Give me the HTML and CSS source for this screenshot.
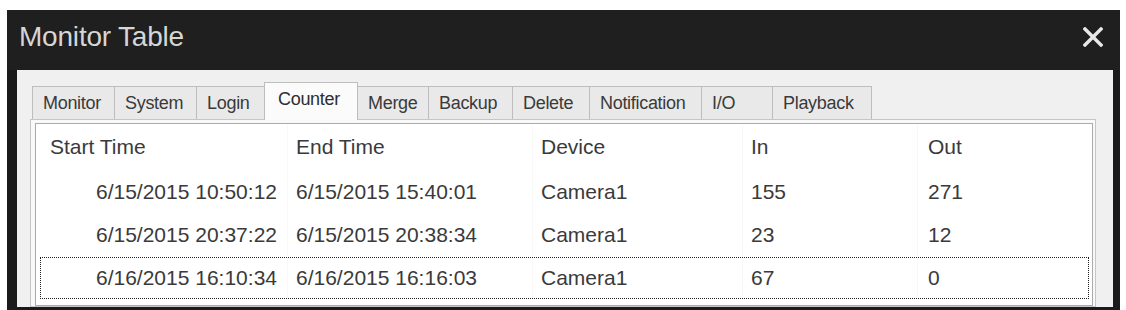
FILE: index.html
```html
<!DOCTYPE html>
<html>
<head>
<meta charset="utf-8">
<link rel="stylesheet" href="styles.css">
</head>
<body>
<div class="window">
  <div class="titlebar">
    <span class="title">Monitor Table</span>
    <svg class="close" width="20" height="20" viewBox="0 0 20 20">
      <path d="M2 2 L18 18 M18 2 L2 18" stroke="#e8e8e8" stroke-width="3.4" stroke-linecap="square" fill="none"/>
    </svg>
  </div>
  <div class="body">
    <div class="tabs">
      <div class="tab">Monitor</div>
      <div class="tab">System</div>
      <div class="tab">Login</div>
      <div class="tab active">Counter</div>
      <div class="tab">Merge</div>
      <div class="tab">Backup</div>
      <div class="tab">Delete</div>
      <div class="tab">Notification</div>
      <div class="tab">I/O</div>
      <div class="tab">Playback</div>
    </div>
    <div class="page">
      <div class="list">
        <div class="row head">
          <div class="c c1">Start Time</div>
          <div class="c">End Time</div>
          <div class="c">Device</div>
          <div class="c">In</div>
          <div class="c">Out</div>
        </div>
        <div class="row">
          <div class="c c1">6/15/2015 10:50:12</div>
          <div class="c">6/15/2015 15:40:01</div>
          <div class="c">Camera1</div>
          <div class="c">155</div>
          <div class="c">271</div>
        </div>
        <div class="row">
          <div class="c c1">6/15/2015 20:37:22</div>
          <div class="c">6/15/2015 20:38:34</div>
          <div class="c">Camera1</div>
          <div class="c">23</div>
          <div class="c">12</div>
        </div>
        <div class="row focus">
          <div class="c c1">6/16/2015 16:10:34</div>
          <div class="c">6/16/2015 16:16:03</div>
          <div class="c">Camera1</div>
          <div class="c">67</div>
          <div class="c">0</div>
        </div>
      </div>
    </div>
  </div>
</div>
</body>
</html>
```
FILE: styles.css
```css
html, body {
  margin: 0;
  padding: 0;
  background: #ffffff;
  overflow: hidden;
}

.window {
  margin: 10px 0 0 7px;
  width: 1113px;
  height: 300px;
  box-sizing: border-box;
  background: #1b1b1b;
  padding: 0 7px 3px 10px;
  display: flex;
  flex-direction: column;
}

.titlebar {
  height: 60px;
  flex: none;
  display: flex;
  align-items: center;
  justify-content: space-between;
  box-sizing: border-box;
  background: #1f1f1f;
  margin: 0 -7px 0 -10px;
  padding: 0 17px 6px 12px;
}

.title {
  font-family: "Liberation Sans", Arial, sans-serif;
  font-size: 28px;
  color: #d6d6d6;
  letter-spacing: -0.2px;
}

.close {
  display: block;
}

.body {
  flex: 1;
  min-height: 0;
  background: #f0f0f0;
  padding-top: 12px;
  display: flex;
  flex-direction: column;
  overflow: hidden;
}

.tabs {
  display: flex;
  align-items: flex-end;
  height: 38px;
  margin: 0 0 -1px 15px;
  position: relative;
  z-index: 1;
  flex: none;
}

.tab {
  height: 33px;
  margin-bottom: 1px;
  box-sizing: border-box;
  border: 1px solid #bdbdbd;
  border-left: none;
  border-bottom: none;
  background: #e9e9e9;
  display: flex;
  align-items: center;
  padding-left: 10px;
  font-family: "Liberation Sans", Arial, sans-serif;
  font-size: 18px;
  color: #3a3a3a;
  letter-spacing: -0.3px;
}

.tab:first-child {
  border-left: 1px solid #bdbdbd;
}

.tab:nth-child(1) { width: 83px; }
.tab:nth-child(2) { width: 82px; }
.tab:nth-child(3) { width: 68px; }
.tab:nth-child(4) { width: 94px; }
.tab:nth-child(5) { width: 71px; }
.tab:nth-child(6) { width: 84px; }
.tab:nth-child(7) { width: 77px; }
.tab:nth-child(8) { width: 112px; }
.tab:nth-child(9) { width: 71px; }
.tab:nth-child(10) { width: 99px; }

.tab.active {
  height: 38px;
  margin-bottom: 0;
  margin-left: -1px;
  border-left: 1px solid #bdbdbd;
  background: #fbfbfb;
  padding-left: 13px;
  padding-bottom: 4px;
  color: #2e2e2e;
}

.page {
  flex: 1;
  margin: 0 17px 0 13px;
  border: 1px solid #c6c6c6;
  background: #f9f9f9;
  padding: 3px 2px 0 4px;
  display: flex;
  flex-direction: column;
}

.list {
  flex: 1;
  background: #ffffff;
  border: 1px solid #ababab;
  font-family: "Liberation Sans", Arial, sans-serif;
  font-size: 21px;
  color: #3a3a3a;
}

.row {
  display: grid;
  grid-template-columns: 251px 245px 210px 175px 1fr;
  height: 43px;
  align-items: center;
  box-sizing: border-box;
}

.row.head {
  height: 46px;
}

.c {
  padding-left: 8px;
  white-space: nowrap;
  height: 100%;
  display: flex;
  align-items: center;
  border-left: 1px solid #f8f8f8;
}

.c1 {
  justify-content: flex-end;
  padding-left: 0;
  padding-right: 10px;
  border-left: none;
}

.head .c1 {
  justify-content: flex-start;
  padding-left: 14px;
}

.row .c:last-child {
  padding-left: 10px;
}

.row.focus {
  margin: 1px 3px 0 4px;
  height: 42px;
  border: 1px dotted #1e1e1e;
  grid-template-columns: 246px 245px 210px 175px 1fr;
}
```
